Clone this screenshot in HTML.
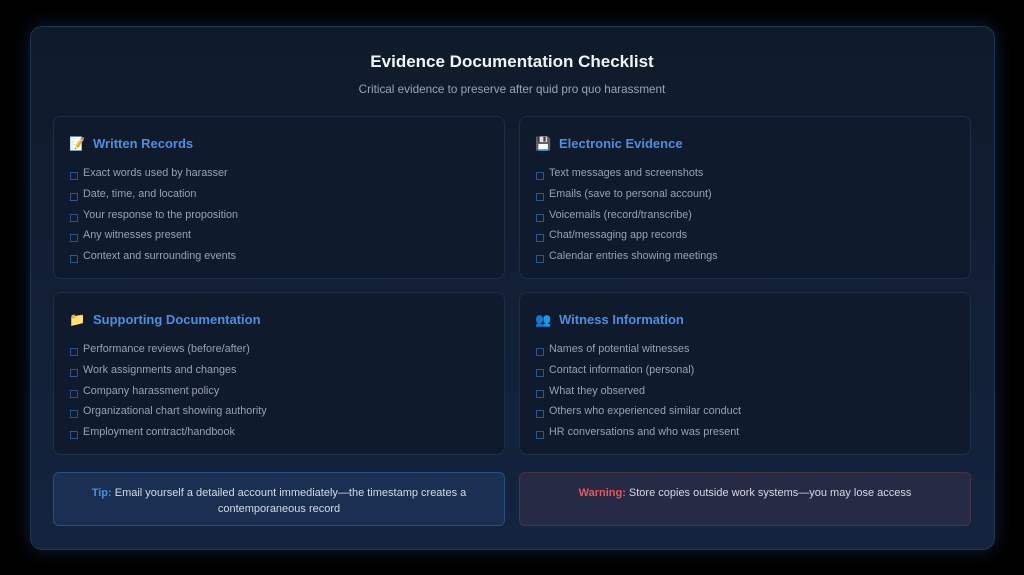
<!DOCTYPE html>
<html><head><meta charset="utf-8"><style>
*{margin:0;padding:0;box-sizing:border-box}
body{width:1024px;height:575px;background:#000;font-family:"Liberation Sans",sans-serif;position:relative;overflow:hidden}
.panel{position:absolute;left:30px;top:26px;width:965px;height:524px;border-radius:12px;border:1px solid #1e3556;background:linear-gradient(180deg,#0f1a2a 0%,#14243f 100%);box-shadow:0 0 18px rgba(40,90,160,.35)}
h1{position:absolute;left:0;right:0;top:52px;text-align:center;color:#f1f4f8;font-size:17px;font-weight:bold}
.sub{position:absolute;left:0;right:0;top:83px;text-align:center;color:#9aa4b3;font-size:11.7px}
.card{position:absolute;width:452px;height:163px;border:1px solid #1c2e4a;border-radius:8px;background:#0f1a2c}
.card h2{position:absolute;left:15px;top:19px;font-size:13px;font-weight:bold;color:#4a8fe0;white-space:nowrap}
.card h2 span{display:inline-block;width:24px;font-size:13px}
.card ul{position:absolute;left:16px;top:50px;list-style:none}
.card li{position:relative;height:20.8px;padding-left:13px;font-size:10.8px;color:#98a2b1;white-space:nowrap}
.card li:before{content:"";position:absolute;left:0;top:5px;width:6px;height:6px;border:1px solid #2a5590}
.box{position:absolute;top:472px;width:452px;height:54px;border-radius:6px;text-align:center;font-size:11px;line-height:16px;padding-top:12px;color:#d6dbe3}
</style></head><body>
<div class="panel"></div>
<h1>Evidence Documentation Checklist</h1>
<div class="sub">Critical evidence to preserve after quid pro quo harassment</div>
<div class="card" style="left:53px;top:116px"><h2><span>📝</span>Written Records</h2><ul><li>Exact words used by harasser</li><li>Date, time, and location</li><li>Your response to the proposition</li><li>Any witnesses present</li><li>Context and surrounding events</li></ul></div>
<div class="card" style="left:519px;top:116px"><h2><span>💾</span>Electronic Evidence</h2><ul><li>Text messages and screenshots</li><li>Emails (save to personal account)</li><li>Voicemails (record/transcribe)</li><li>Chat/messaging app records</li><li>Calendar entries showing meetings</li></ul></div>
<div class="card" style="left:53px;top:292px"><h2><span>📁</span>Supporting Documentation</h2><ul><li>Performance reviews (before/after)</li><li>Work assignments and changes</li><li>Company harassment policy</li><li>Organizational chart showing authority</li><li>Employment contract/handbook</li></ul></div>
<div class="card" style="left:519px;top:292px"><h2><span>👥</span>Witness Information</h2><ul><li>Names of potential witnesses</li><li>Contact information (personal)</li><li>What they observed</li><li>Others who experienced similar conduct</li><li>HR conversations and who was present</li></ul></div>
<div class="box" style="left:53px;background:#1a2f52;border:1px solid #2a4c7e"><b style="color:#4a8fe0">Tip:</b> Email yourself a detailed account immediately—the timestamp creates a<br>contemporaneous record</div>
<div class="box" style="left:519px;background:#272a45;border:1px solid #4a3345"><b style="color:#e05a5a">Warning:</b> Store copies outside work systems—you may lose access</div>
</body></html>
